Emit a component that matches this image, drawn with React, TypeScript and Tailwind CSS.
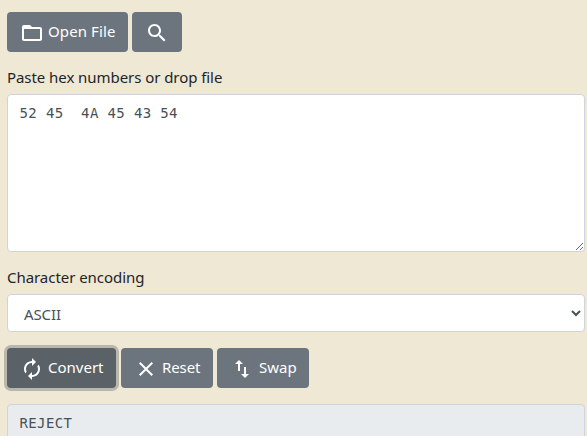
import type { ReactNode } from 'react';

function Icon({ d }: { d: string }) {
  return (
    <svg viewBox="0 0 24 24" className="mt-px size-6 shrink-0 fill-current">
      <path d={d} />
    </svg>
  );
}

const icons = {
  folder:
    'M20 6h-8l-2-2H4c-1.1 0-1.99.9-1.99 2L2 18c0 1.1.9 2 2 2h16c1.1 0 2-.9 2-2V8c0-1.1-.9-2-2-2zm0 12H4V8h16v10z',
  search:
    'M15.5 14h-.79l-.28-.27C15.41 12.59 16 11.11 16 9.5 16 5.91 13.09 3 9.5 3S3 5.91 3 9.5 5.91 16 9.5 16c1.61 0 3.09-.59 4.23-1.57l.27.28v.79l5 4.99L20.49 19l-4.99-5zm-6 0C7.01 14 5 11.99 5 9.5S7.01 5 9.5 5 14 7.01 14 9.5 11.99 14 9.5 14z',
  renew:
    'M12 6v3l4-4-4-4v3c-4.42 0-8 3.58-8 8 0 1.57.46 3.03 1.24 4.26L6.7 14.8c-.45-.83-.7-1.79-.7-2.8 0-3.31 2.69-6 6-6zm6.76 1.74L17.3 9.2c.44.84.7 1.79.7 2.8 0 3.31-2.69 6-6 6v-3l-4 4 4 4v-3c4.42 0 8-3.58 8-8 0-1.57-.46-3.03-1.24-4.26z',
  close:
    'M19 6.41L17.59 5 12 10.59 6.41 5 5 6.41 10.59 12 5 17.59 6.41 19 12 13.41 17.59 19 19 17.59 13.41 12z',
  swap: 'M16 17.01V10h-2v7.01h-3L15 21l4-3.99h-3zM9 3L5 6.99h3V14h2V6.99h3L9 3z',
};

function Button({ className, icon, children }: { className: string; icon: string; children?: ReactNode }) {
  return (
    <button
      type="button"
      className={`flex h-10 shrink-0 items-center gap-1 rounded pl-[13px] text-[15px] whitespace-nowrap text-white ${className}`}
    >
      <Icon d={icon} />
      {children}
    </button>
  );
}

export default function App() {
  return (
    <main className="h-[436px] overflow-hidden bg-[#efe8d5] pt-3 pr-0.5 pl-[7px] font-['Noto_Sans',sans-serif] text-[15px] leading-6 text-[#212529]">
      <div className="flex gap-1">
        <Button className="w-[121px] bg-[#6c757d]" icon={icons.folder}>
          <span className="pb-0.5 tracking-[0.1px]">Open File</span>
        </Button>
        <Button className="w-[50px] bg-[#6c757d]" icon={icons.search} />
      </div>

      <label htmlFor="source" className="mt-[13px] block h-[29px]">
        <span className="tracking-[-0.06px]">Paste hex numbers or drop file</span>
      </label>
      <textarea
        id="source"
        spellCheck={false}
        defaultValue="52 45  4A 45 43 54"
        className="block h-[158px] w-full resize-y rounded border border-[#ced4da] bg-white py-1.5 pr-3 pl-[11.5px] font-['DejaVu_Sans_Mono',monospace] text-[14px] leading-6 tracking-[0.37px] text-[#495057] outline-none"
      />

      <label htmlFor="encoding" className="mt-[13px] block h-[29px]">
        <span className="tracking-[-0.05px]">Character encoding</span>
      </label>
      <select
        id="encoding"
        className="block h-[38px] w-full rounded border border-[#ced4da] bg-white pt-0.5 pr-px pl-3 text-[15px] tracking-[-0.1px] text-[#495057] outline-none"
      >
        <option>ASCII</option>
      </select>

      <div className="mt-4 flex">
        <Button className="mr-[5px] w-[109px] bg-[#5a6268] shadow-[0_0_0_3px_#b7b7ad]" icon={icons.renew}>
          <span className="pb-0.5">Convert</span>
        </Button>
        <Button className="mr-1 w-[92px] bg-[#6c757d]" icon={icons.close}>
          <span className="pb-0.5 tracking-[-0.1px]">Reset</span>
        </Button>
        <Button className="w-[92px] bg-[#6c757d]" icon={icons.swap}>
          <span className="pb-0.5 pl-px">Swap</span>
        </Button>
      </div>

      <textarea
        readOnly
        defaultValue="REJECT"
        aria-label="Result"
        className="mt-4 block h-[158px] w-full resize-y rounded border border-[#ced4da] bg-[#e9ecef] py-1.5 pr-3 pl-[11.5px] font-['DejaVu_Sans_Mono',monospace] text-[14px] leading-6 tracking-[0.37px] text-[#495057] outline-none"
      />
    </main>
  );
}
